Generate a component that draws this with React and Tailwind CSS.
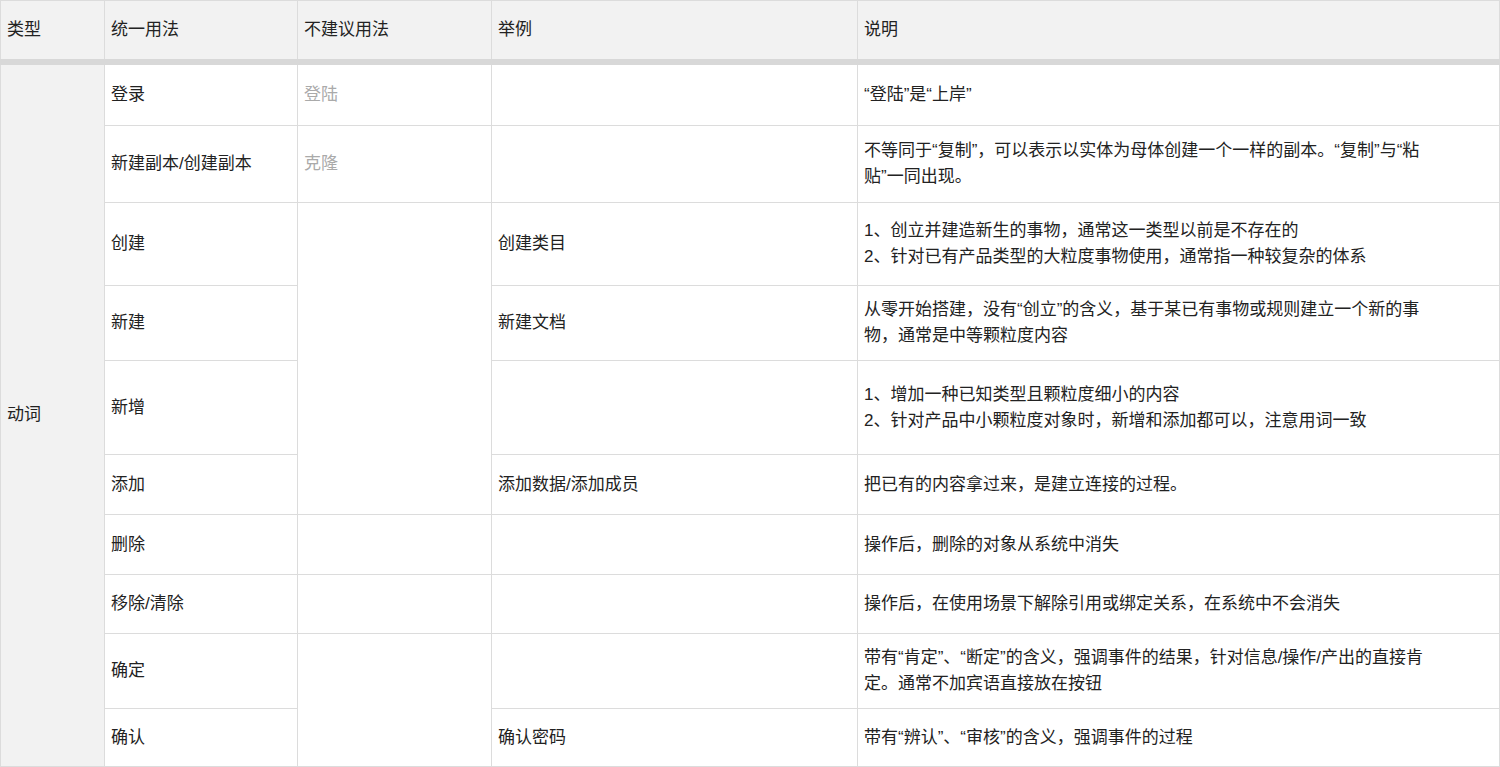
const rows = [
  { h: 64, a: "登录", b: "登陆", c: "", d: ["“登陆”是“上岸”"] },
  { h: 77, a: "新建副本/创建副本", b: "克隆", c: "", d: ["不等同于“复制”，可以表示以实体为母体创建一个一样的副本。“复制”与“粘", "贴”一同出现。"] },
  { h: 83, a: "创建", b: null, bSpan: 4, c: "创建类目", d: ["1、创立并建造新生的事物，通常这一类型以前是不存在的", "2、针对已有产品类型的大粒度事物使用，通常指一种较复杂的体系"] },
  { h: 75, a: "新建", skipB: true, c: "新建文档", d: ["从零开始搭建，没有“创立”的含义，基于某已有事物或规则建立一个新的事", "物，通常是中等颗粒度内容"] },
  { h: 94, a: "新增", skipB: true, c: "", d: ["1、增加一种已知类型且颗粒度细小的内容", "2、针对产品中小颗粒度对象时，新增和添加都可以，注意用词一致"] },
  { h: 60, a: "添加", skipB: true, c: "添加数据/添加成员", d: ["把已有的内容拿过来，是建立连接的过程。"] },
  { h: 60, a: "删除", b: "", c: "", d: ["操作后，删除的对象从系统中消失"] },
  { h: 59, a: "移除/清除", b: "", c: "", d: ["操作后，在使用场景下解除引用或绑定关系，在系统中不会消失"] },
  { h: 75, a: "确定", b: null, bSpan: 2, c: "", d: ["带有“肯定”、“断定”的含义，强调事件的结果，针对信息/操作/产出的直接肯", "定。通常不加宾语直接放在按钮"] },
  { h: 58, a: "确认", skipB: true, c: "确认密码", d: ["带有“辨认”、“审核”的含义，强调事件的过程"] },
];

const cell = "border border-[#dcdcdc] px-[6px] align-middle";

export default function App() {
  return (
    <div
      className="w-[1500px] h-[767px] overflow-hidden bg-white text-[17px] text-[#222] leading-[26px]"
      style={{ fontFamily: '"Liberation Sans", "Noto Sans CJK SC", sans-serif' }}
    >
      <table className="w-[1500px] border-collapse table-fixed border border-[#bdbdbd]">
        <colgroup>
          <col className="w-[104px]" />
          <col className="w-[193px]" />
          <col className="w-[194px]" />
          <col className="w-[366px]" />
          <col />
        </colgroup>
        <thead>
          <tr className="h-[61px] bg-[#f2f2f2]">
            {["类型", "统一用法", "不建议用法", "举例", "说明"].map((t) => (
              <th key={t} className={`${cell} border-b-[6px] border-b-[#d8d8d8] text-left font-normal`}>
                {t}
              </th>
            ))}
          </tr>
        </thead>
        <tbody>
          {rows.map((r, i) => (
            <tr key={r.a} style={{ height: r.h }}>
              {i === 0 && (
                <td rowSpan={rows.length + 1} className={`${cell} bg-[#f2f2f2]`}>
                  动词
                </td>
              )}
              <td className={cell}>{r.a}</td>
              {!r.skipB && (
                <td rowSpan={r.bSpan || 1} className={`${cell} text-[#aaa]`}>
                  {r.b}
                </td>
              )}
              <td className={cell}>{r.c}</td>
              <td className={`${cell} pr-3`}>
                {r.d.map((l) => (
                  <div key={l} className="whitespace-nowrap">{l}</div>
                ))}
              </td>
            </tr>
          ))}
        </tbody>
      </table>
    </div>
  );
}
